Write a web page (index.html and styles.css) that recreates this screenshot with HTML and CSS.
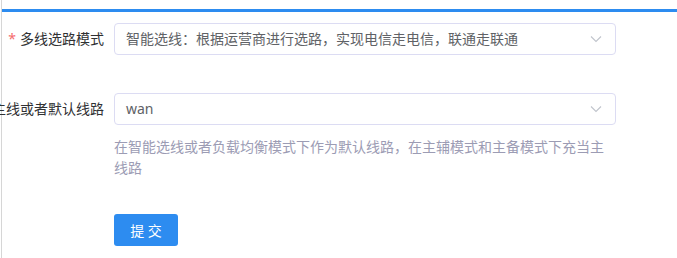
FILE: index.html
```html
<!DOCTYPE html>
<html lang="zh-CN">
<head>
<meta charset="utf-8">
<title>多线选路</title>
<link rel="stylesheet" href="styles.css">
</head>
<body>
<div class="page">
  <div class="topbar"></div>
  <form class="form">
    <div class="row">
      <label class="label"><span class="label-text required">多线选路模式</span></label>
      <div class="control">
        <div class="select">
          <span class="value">智能选线：根据运营商进行选路，实现电信走电信，联通走联通</span>
          <svg class="arrow" width="12" height="8" viewBox="0 0 12 8"><path d="M1 1.5 L6 6.5 L11 1.5" fill="none" stroke="#c0c4cc" stroke-width="1.1"/></svg>
        </div>
      </div>
    </div>
    <div class="row row-second">
      <label class="label"><span class="label-text">主线或者默认线路</span></label>
      <div class="control">
        <div class="select">
          <span class="value">wan</span>
          <svg class="arrow" width="12" height="8" viewBox="0 0 12 8"><path d="M1 1.5 L6 6.5 L11 1.5" fill="none" stroke="#c0c4cc" stroke-width="1.1"/></svg>
        </div>
        <div class="help">在智能选线或者负载均衡模式下作为默认线路，在主辅模式和主备模式下充当主线路</div>
      </div>
    </div>
    <div class="row row-actions">
      <div class="label"></div>
      <div class="control">
        <button type="button" class="btn">提 交</button>
      </div>
    </div>
  </form>
</div>
</body>
</html>
```
FILE: styles.css
```css
html, body {
  margin: 0;
  padding: 0;
  background: #ffffff;
}
body {
  font-family: "Noto Sans", "Noto Sans CJK SC", sans-serif;
  font-size: 14px;
  overflow: hidden;
}
.page {
  margin-left: 1px;
  border-left: 1px solid #d6d6d6;
  min-height: 258px;
  padding-top: 9px;
  box-sizing: border-box;
}
.topbar {
  height: 3px;
  background: #2d8cf0;
}
.form {
  margin: 0;
  padding-top: 11px;
}
.row {
  display: grid;
  grid-template-columns: 112px 502px;
  align-items: start;
}
.row-second {
  margin-top: 38px;
}
.row-actions {
  margin-top: 36px;
}
.label {
  box-sizing: border-box;
  padding-right: 10px;
  height: 32px;
  line-height: 32px;
  display: flex;
  justify-content: flex-end;
  min-width: 0;
  color: #303133;
  font-size: 14px;
}
.label-text {
  white-space: nowrap;
  flex: none;
}
.label-text.required::before {
  content: "*";
  color: #f56c6c;
  margin-right: 4px;
}
.select {
  box-sizing: border-box;
  height: 32px;
  border: 1px solid #dcdcf3;
  border-radius: 4px;
  display: flex;
  align-items: center;
  justify-content: space-between;
  padding: 0 12px 0 11px;
  color: #606266;
  line-height: 30px;
}
.value {
  white-space: nowrap;
}
.arrow {
  display: block;
  margin-right: 1px;
}
.help {
  margin-top: 11px;
  line-height: 21px;
  color: #9c9cb4;
  font-size: 14px;
}
.btn {
  width: 64px;
  height: 32px;
  border: none;
  border-radius: 3px;
  background: #2d8cf0;
  color: #ffffff;
  font-family: "Noto Sans", "Noto Sans CJK SC", sans-serif;
  font-size: 14px;
  padding: 0;
  cursor: pointer;
}
```
